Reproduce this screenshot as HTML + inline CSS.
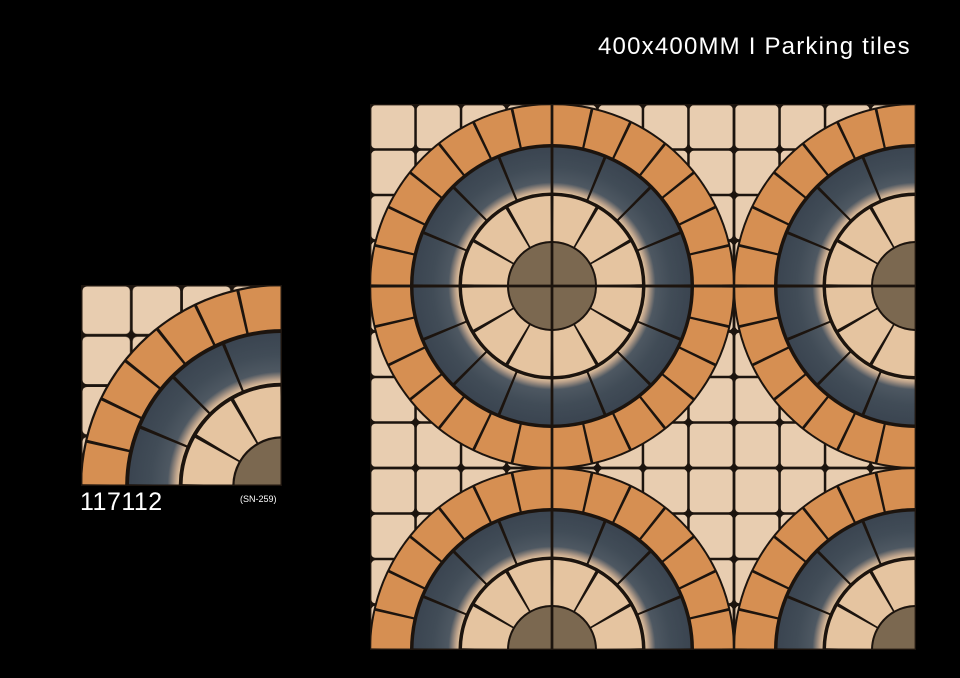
<!DOCTYPE html>
<html><head><meta charset="utf-8"><style>
html,body{margin:0;padding:0;background:#000;}
body{width:960px;height:678px;position:relative;overflow:hidden;font-family:"Liberation Sans",sans-serif;color:#fff;}
.t{position:absolute;white-space:nowrap;line-height:1;}
</style></head><body>
<svg width="960" height="678" style="position:absolute;left:0;top:0;display:block">
<defs>
<pattern id="grid" x="0" y="0" width="45.5" height="45.5" patternUnits="userSpaceOnUse">
<rect x="1.3" y="1.3" width="43" height="43" rx="4" fill="#e8cdb0"/>
</pattern>
<radialGradient id="bl" gradientUnits="userSpaceOnUse" cx="182" cy="182" r="140">
<stop offset="0.66" stop-color="#e8c8a0"/>
<stop offset="0.69" stop-color="#b9a08a"/>
<stop offset="0.74" stop-color="#4e5862"/>
<stop offset="0.85" stop-color="#414c57"/>
<stop offset="1" stop-color="#3a4450"/>
</radialGradient>
<symbol id="t" viewBox="0 0 182 182">
<rect width="182" height="182" fill="#1c140e"/>
<rect width="182" height="182" fill="url(#grid)"/>
<circle cx="182" cy="182" r="183" fill="#1c140e"/>
<circle cx="182" cy="182" r="161.5" fill="none" stroke="#d68f52" stroke-width="39" stroke-dasharray="33.74 2.5" stroke-dashoffset="34.99"/>
<circle cx="182" cy="182" r="116" fill="none" stroke="url(#bl)" stroke-width="45" stroke-dasharray="43.05 2.5" stroke-dashoffset="44.3"/>
<circle cx="182" cy="182" r="67.5" fill="none" stroke="#e5c4a0" stroke-width="45" stroke-dasharray="32.84 2.5" stroke-dashoffset="34.09"/>
<circle cx="182" cy="182" r="43" fill="#7b6850"/>
<line x1="182" y1="0" x2="182" y2="182" stroke="#1c140e" stroke-width="2.5"/>
<line x1="0" y1="182" x2="182" y2="182" stroke="#1c140e" stroke-width="2.5"/>
<rect width="182" height="182" fill="none" stroke="#1c140e" stroke-width="2.5"/>
</symbol>
</defs>
<use href="#t" x="81" y="285" width="201" height="201"/>
<g transform="translate(370,104)">
<use href="#t" x="0" y="0" width="182" height="182"/>
<g transform="translate(364,0) scale(-1,1)"><use href="#t" width="182" height="182"/></g>
<use href="#t" x="364" y="0" width="182" height="182"/>
<g transform="translate(0,364) scale(1,-1)"><use href="#t" width="182" height="182"/></g>
<g transform="translate(364,364) scale(-1,-1)"><use href="#t" width="182" height="182"/></g>
<g transform="translate(364,364) scale(1,-1)"><use href="#t" width="182" height="182"/></g>
<use href="#t" x="0" y="364" width="182" height="182"/>
<g transform="translate(364,364) scale(-1,1)"><use href="#t" width="182" height="182"/></g>
<use href="#t" x="364" y="364" width="182" height="182"/>
</g>
</svg>
<div class="t" style="left:598px;top:35px;font-size:24px;letter-spacing:1.2px;">400x400MM I Parking tiles</div>
<div class="t" style="left:80px;top:490px;font-size:25px;letter-spacing:0.5px;">117112</div>
<div class="t" style="left:240px;top:495px;font-size:9px;">(SN-259)</div>
</body></html>
